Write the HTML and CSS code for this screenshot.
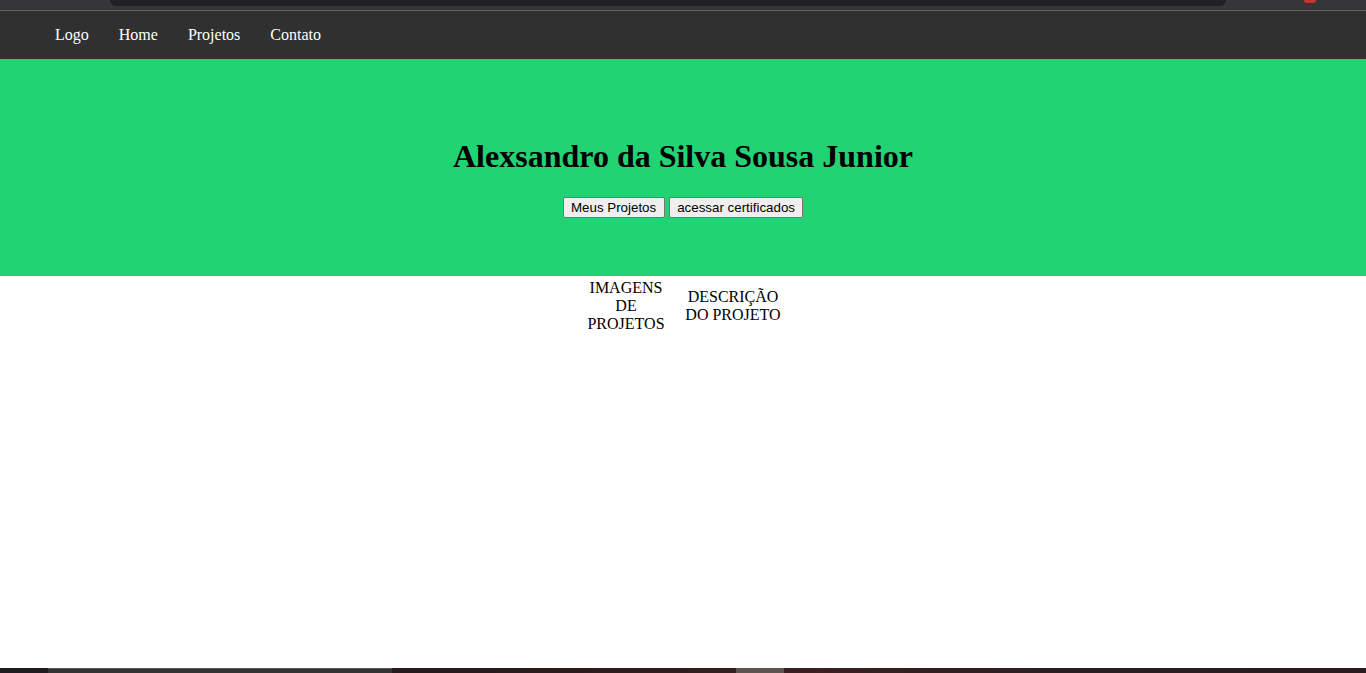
FILE: index.html
```html
<!DOCTYPE html>
<html lang="pt-BR">
<head>
<meta charset="utf-8">
<title>Alexsandro da Silva Sousa Junior</title>
<link rel="stylesheet" href="styles.css">
</head>
<body>
<div class="chrome">
  <div class="chrome-bar"></div>
  <div class="chrome-icon"></div>
</div>
<nav class="nav">
  <a class="nav-link" href="#">Logo</a>
  <a class="nav-link" href="#">Home</a>
  <a class="nav-link" href="#">Projetos</a>
  <a class="nav-link" href="#">Contato</a>
</nav>
<header class="hero">
  <h1 class="hero-title">Alexsandro da Silva Sousa Junior</h1>
  <div class="hero-actions">
    <button class="btn">Meus Projetos</button>
    <button class="btn">acessar certificados</button>
  </div>
</header>
<main class="main">
  <section class="project">
    <div class="project-img">IMAGENS DE PROJETOS</div>
    <div class="project-desc">DESCRIÇÃO DO PROJETO</div>
  </section>
</main>
<div class="taskbar">
  <div class="taskbar-item"></div>
  <div class="taskbar-glow"></div>
</div>
</body>
</html>
```
FILE: styles.css
```css
* { box-sizing: border-box; }
html, body { height: 100%; }
body {
  margin: 0;
  font-family: "Liberation Serif", "Times New Roman", serif;
  font-size: 16px;
  display: flex;
  flex-direction: column;
  background: #fff;
  color: #000;
}
.chrome {
  height: 11px;
  background: #35363a;
  border-bottom: 1px solid #626262;
  position: relative;
  flex: none;
}
.chrome-bar {
  margin-left: 110px;
  width: 1116px;
  height: 6px;
  background: #202124;
  border-radius: 0 0 8px 8px;
}
.chrome-icon {
  position: absolute;
  left: 1304px;
  top: 0;
  width: 12px;
  height: 3px;
  background: #c0392b;
  border-radius: 0 0 6px 6px;
}
.nav {
  height: 48px;
  background: #303030;
  display: flex;
  align-items: center;
  gap: 30px;
  padding-left: 55px;
  flex: none;
}
.nav-link {
  color: #fff;
  text-decoration: none;
  font-size: 16px;
}
.hero {
  background: #22d374;
  height: 217px;
  padding-top: 79px;
  text-align: center;
  flex: none;
}
.hero-title {
  margin: 0;
  font-size: 32px;
  font-weight: bold;
  line-height: 37px;
}
.hero-actions {
  margin-top: 22px;
  display: flex;
  justify-content: center;
  gap: 4px;
}
.btn {
  font-family: "Liberation Sans", Arial, sans-serif;
  font-size: 13.33px;
  padding: 1px 7.5px;
  background: #efefef;
  border: 1px solid #767676;
  border-radius: 2px;
  color: #000;
  height: 21px;
}
.main {
  flex: 1;
}
.project {
  display: flex;
  justify-content: center;
  align-items: center;
  gap: 12px;
  padding-top: 3px;
  padding-left: 4px;
}
.project-img {
  width: 84px;
  text-align: center;
  line-height: 18px;
}
.project-desc {
  width: 106px;
  text-align: center;
  line-height: 18px;
}
.taskbar {
  height: 5px;
  flex: none;
  background: linear-gradient(90deg, #1f1c1f 0%, #2a1a1c 40%, #3a2020 60%, #2a1e22 80%, #2b1a1d 100%);
  position: relative;
}
.taskbar-item {
  position: absolute;
  left: 48px;
  top: 0;
  width: 344px;
  height: 5px;
  background: #333;
  border-top: 1px solid #5a5a5a;
}
.taskbar-glow {
  position: absolute;
  left: 736px;
  top: 0;
  width: 48px;
  height: 5px;
  background: #5e5450;
}
```
